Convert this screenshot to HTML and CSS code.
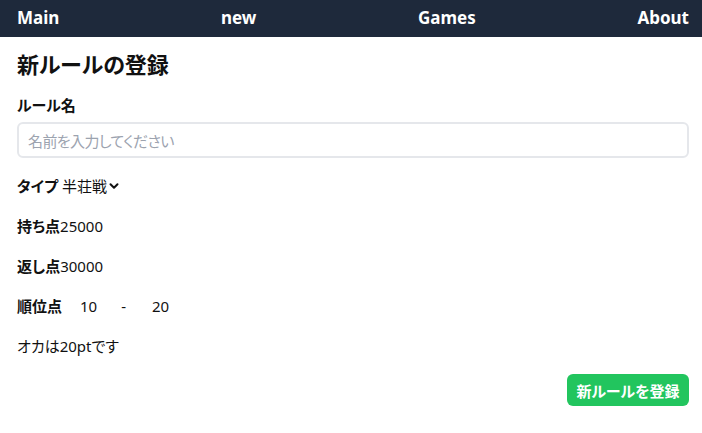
FILE: index.html
```html
<!DOCTYPE html>
<html lang="ja">
<head>
<meta charset="utf-8">
<link rel="stylesheet" href="styles.css">
</head>
<body>
<nav class="nav">
  <a class="nav-link">Main</a>
  <a class="nav-link">new</a>
  <a class="nav-link">Games</a>
  <a class="nav-link">About</a>
</nav>
<main class="page">
  <h1 class="title">新ルールの登録</h1>
  <label class="label">ルール名</label>
  <div class="input">名前を入力してください</div>
  <div class="row row-type">
    <span class="bold">タイプ</span>
    <span class="select">半荘戦<svg class="chev" viewBox="0 0 10 10" width="10" height="10"><path d="M1.5 3.2 L5 6.7 L8.5 3.2" fill="none" stroke="#111" stroke-width="2" stroke-linecap="round" stroke-linejoin="round"/></svg></span>
  </div>
  <div class="row"><span class="bold">持ち点</span><span>25000</span></div>
  <div class="row"><span class="bold">返し点</span><span>30000</span></div>
  <div class="row row-rank">
    <span class="bold">順位点</span>
    <span class="num">10</span>
    <span class="dash">-</span>
    <span class="num">20</span>
  </div>
  <div class="row">オカは20ptです</div>
  <div class="actions"><button class="btn">新ルールを登録</button></div>
</main>
</body>
</html>
```
FILE: styles.css
```css
* { box-sizing: border-box; }
html, body { margin: 0; padding: 0; background: #fff; }
body {
  font-family: "Noto Sans", "Noto Sans CJK JP", sans-serif;
  color: #111;
  font-size: 15px;
  font-feature-settings: "palt";
}
.nav {
  height: 37px;
  background: #1e293b;
  display: flex;
  justify-content: space-between;
  align-items: center;
  padding: 0 13px 0 17px;
}
.nav-link {
  color: #fff;
  font-weight: 700;
  font-size: 17px;
  line-height: 24px;
  margin-top: -1px;
}
.page {
  padding: 10px 13px 0 17px;
  display: flex;
  flex-direction: column;
}
.title {
  margin: 0;
  font-size: 22px;
  line-height: 32px;
  font-weight: 700;
  font-family: "Noto Sans CJK JP", sans-serif;
}
.label {
  margin-top: 14px;
  font-weight: 700;
  line-height: 24px;
  font-family: "Noto Sans CJK JP", sans-serif;
}
.input {
  margin-top: 5px;
  height: 36px;
  border: 2px solid #e5e7eb;
  border-radius: 6px;
  padding: 0 9px;
  display: flex;
  align-items: center;
  color: #9ca3af;
  font-family: "Noto Sans CJK JP", sans-serif;
  font-size: 15px;
  letter-spacing: -0.6px;
}
.row {
  margin-top: 16px;
  line-height: 24px;
  display: flex;
  align-items: center;
  font-family: "Noto Sans", "Noto Sans CJK JP", sans-serif;
}
.bold { font-weight: 700; font-family: "Noto Sans CJK JP", sans-serif; }
.row-type .select { margin-left: 4px; display: inline-flex; align-items: center; font-family: "Noto Sans CJK JP", sans-serif; }
.chev { margin-left: 2px; }
.row-rank .num { margin-left: 18px; }
.row-rank .num + .dash { margin-left: 24px; }
.row-rank .dash + .num { margin-left: 26px; }
.actions {
  margin-top: 16px;
  display: flex;
  justify-content: flex-end;
}
.btn {
  width: 122px;
  height: 32px;
  border: none;
  border-radius: 6px;
  background: #22c55e;
  color: #fff;
  font-weight: 700;
  font-size: 15px;
  font-family: "Noto Sans CJK JP", sans-serif;
  font-feature-settings: "palt";
  padding: 0;
}
```
